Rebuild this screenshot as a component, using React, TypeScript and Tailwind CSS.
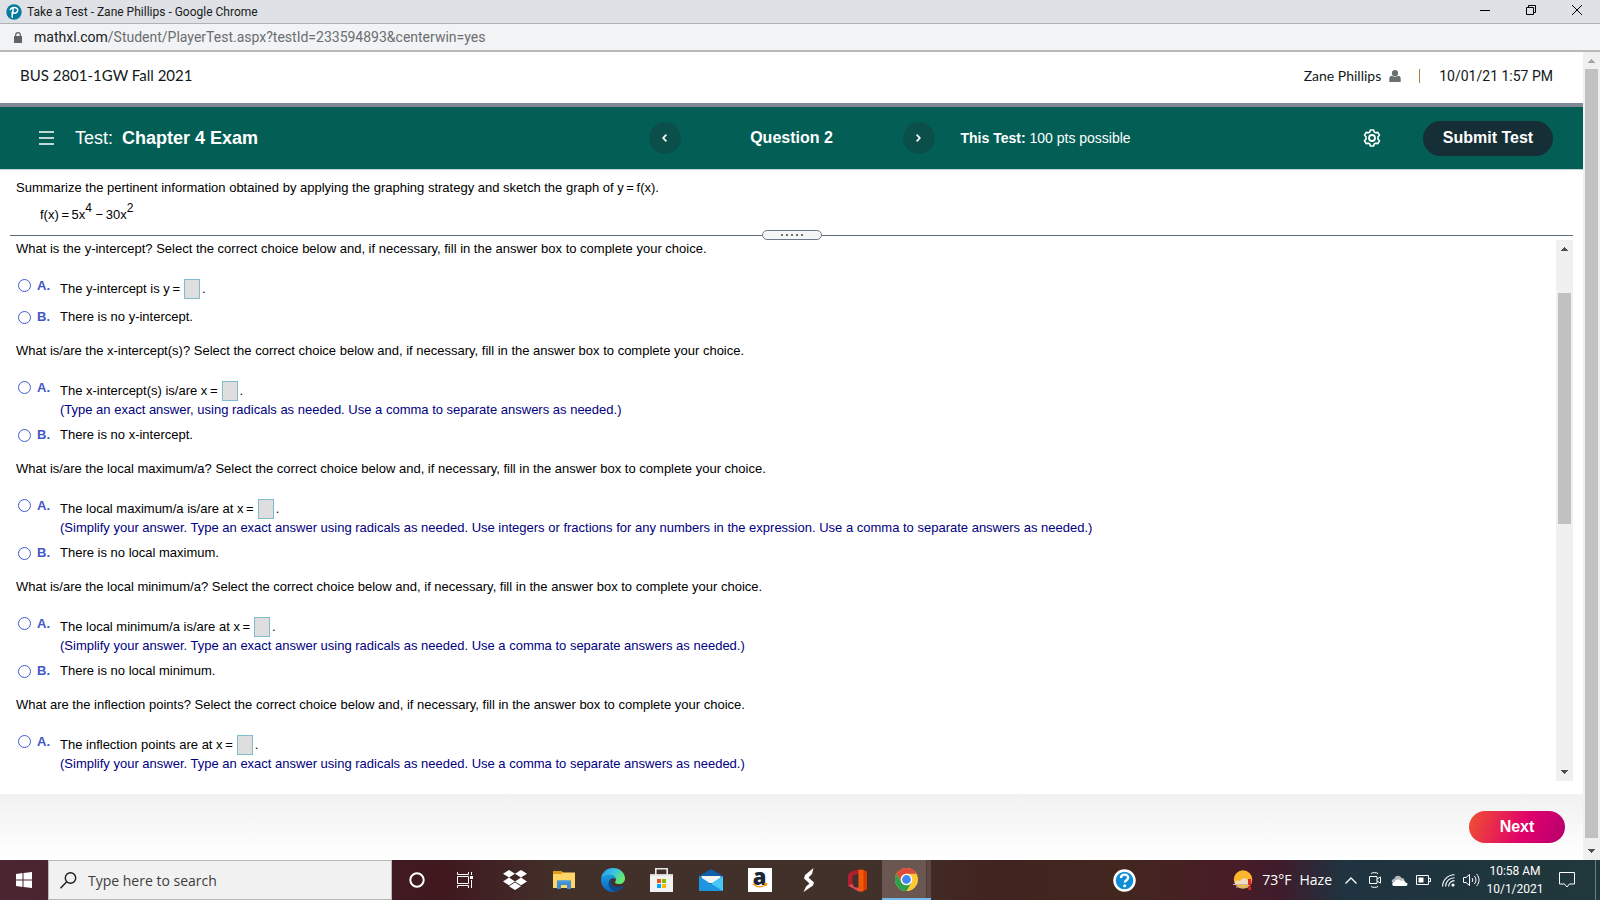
import React, { useState } from 'react';

interface Question {
  id: string;
  prompt: string;
  fill: string;
  hint?: string;
  none?: string;
}

// Math text uses thin spaces (\u2009) around operators
const QUESTIONS: Question[] = [
  {
    id: 'y-int',
    prompt: 'What is the y-intercept? Select the correct choice below and, if necessary, fill in the answer box to complete your choice.',
    fill: 'The y-intercept is y\u2009=',
    none: 'There is no y-intercept.'
  },
  {
    id: 'x-int',
    prompt: 'What is/are the x-intercept(s)? Select the correct choice below and, if necessary, fill in the answer box to complete your choice.',
    fill: 'The x-intercept(s) is/are x\u2009=',
    hint: '(Type an exact answer, using radicals as needed. Use a comma to separate answers as needed.)',
    none: 'There is no x-intercept.'
  },
  {
    id: 'max',
    prompt: 'What is/are the local maximum/a? Select the correct choice below and, if necessary, fill in the answer box to complete your choice.',
    fill: 'The local maximum/a is/are at x\u2009=',
    hint: '(Simplify your answer. Type an exact answer using radicals as needed. Use integers or fractions for any numbers in the expression. Use a comma to separate answers as needed.)',
    none: 'There is no local maximum.'
  },
  {
    id: 'min',
    prompt: 'What is/are the local minimum/a? Select the correct choice below and, if necessary, fill in the answer box to complete your choice.',
    fill: 'The local minimum/a is/are at x\u2009=',
    hint: '(Simplify your answer. Type an exact answer using radicals as needed. Use a comma to separate answers as needed.)',
    none: 'There is no local minimum.'
  },
  {
    id: 'inflection',
    prompt: 'What are the inflection points? Select the correct choice below and, if necessary, fill in the answer box to complete your choice.',
    fill: 'The inflection points are at x\u2009=',
    hint: '(Simplify your answer. Type an exact answer using radicals as needed. Use a comma to separate answers as needed.)'
  }
];

const RADIO = 'appearance-none shrink-0 w-[13px] h-[13px] rounded-full border border-[#3f5fd0] bg-white checked:bg-[#3f5fd0]';

const QuestionBlock: React.FC<{ q: Question }> = ({ q }) => {
  const [choice, setChoice] = useState('');
  const [answer, setAnswer] = useState('');

  return (
    <fieldset>
      <legend className="leading-5 mb-5">{q.prompt}</legend>
      <div className="flex flex-col gap-2 pl-0.5">
        <div className="flex items-start">
          <input id={`${q.id}-a`} type="radio" name={q.id} checked={choice === 'a'} onChange={() => setChoice('a')} className={RADIO} />
          <label htmlFor={`${q.id}-a`} className="w-[23px] ml-1.5 text-[13px] leading-[14px] font-bold text-[#4257c9]">A.</label>
          <div>
            <div className="flex items-center h-5">
              <label htmlFor={`${q.id}-box`}>{q.fill}</label>
              <input
                id={`${q.id}-box`}
                type="text"
                value={answer}
                onChange={(e) => setAnswer(e.target.value)}
                className="w-4 h-5 ml-1 mr-0.5 border border-[#7fbccb] bg-[#dedede]"
              />
              <span>.</span>
            </div>
            {q.hint && <p className="leading-[18px] -mb-0.5 text-[#00007f]">{q.hint}</p>}
          </div>
        </div>
        {q.none && (
          <div className="flex items-center h-5">
            <input id={`${q.id}-b`} type="radio" name={q.id} checked={choice === 'b'} onChange={() => setChoice('b')} className={RADIO} />
            <label htmlFor={`${q.id}-b`} className="flex items-center ml-1.5">
              <span className="w-[23px] text-[13px] leading-5 font-bold text-[#4257c9]">B.</span>
              {q.none}
            </label>
          </div>
        )}
      </div>
    </fieldset>
  );
};

const Arrow: React.FC<{ up?: boolean; color: string }> = ({ up, color }) => (
  <svg width="7" height="4" viewBox="0 0 7 4" fill={color} shapeRendering="crispEdges">
    {up ? <path d="M3 0h1v1h1v1h1v1h1v1H0V3h1V2h1V1h1z" /> : <path d="M0 0h7v1H6v1H5v1H4v1H3V3H2V2H1V1H0z" />}
  </svg>
);

const TitleBar = () => (
  <div className="flex items-center h-6 pl-1.5 pr-[18px] bg-[#dee1e6] border-b border-[#b1b2b4] text-xs text-[#1b1b1b]">
    <svg width="16" height="16" viewBox="0 0 16 16" className="shrink-0">
      <circle cx="8" cy="8" r="7.7" fill="#047a9c" />
      <path d="M6.2 13.2V8.2M4.2 5.6C5.4 3.8 7.6 3.2 9.6 3.7c2 .6 2.6 2.3 1.8 3.8-.8 1.3-2.6 1.9-4 1.5M7 4.5v4" fill="none" stroke="#fff" strokeWidth="1.5" strokeLinecap="round" />
    </svg>
    <span className="ml-[5px]">Take a Test - Zane Phillips - Google Chrome</span>
    <div className="ml-auto flex items-center gap-9 -mt-1">
      <button aria-label="Minimize">
        <svg width="10" height="10" viewBox="0 0 10 10" className="block"><path d="M0 5.5h10" stroke="#000" /></svg>
      </button>
      <button aria-label="Restore">
        <svg width="10" height="10" viewBox="0 0 10 10" className="block" fill="none" stroke="#000"><path d="M.5 2.5h7v7h-7zM2.5 2.5v-2h7v7h-2" /></svg>
      </button>
      <button aria-label="Close">
        <svg width="10" height="10" viewBox="0 0 10 10" className="block"><path d="M0 0l10 10M10 0L0 10" stroke="#000" /></svg>
      </button>
    </div>
  </div>
);

const TestBar = () => (
  <div className="flex items-center h-[62px] px-[30px] bg-[#035f55] text-white">
    <div className="flex-1 flex items-center">
      <button aria-label="Menu" className="ml-2">
        <svg width="16" height="14" viewBox="0 0 16 14" className="block" stroke="#fff" strokeWidth="1.7"><path d="M1 1h15M1 7h15M1 13h15" /></svg>
      </button>
      <h1 className="ml-[21px] text-lg leading-5">
        Test: <b className="ml-1">Chapter 4 Exam</b>
      </h1>
    </div>
    <div className="flex items-center justify-between w-[286px]">
      <button aria-label="Previous question" className="flex items-center justify-center size-8 rounded-full bg-[#0b4f4b]">
        <svg width="5" height="8" viewBox="0 0 5 8" fill="none" stroke="#fff" strokeWidth="1.8"><path d="M4.4.6L1.2 4l3.2 3.4" /></svg>
      </button>
      <h2 className="text-base leading-5 font-bold">Question 2</h2>
      <button aria-label="Next question" className="flex items-center justify-center size-8 rounded-full bg-[#0b4f4b]">
        <svg width="5" height="8" viewBox="0 0 5 8" fill="none" stroke="#fff" strokeWidth="1.8"><path d="M.6.6L3.8 4 .6 7.4" /></svg>
      </button>
    </div>
    <div className="flex-1 flex items-center">
      <span className="ml-[26px] text-sm leading-5"><b>This Test:</b> 100 pts possible</span>
      <button aria-label="Settings" className="ml-auto mr-[42px]">
        <svg width="18" height="18" viewBox="0 0 18 18" className="block" fill="none" stroke="#fff">
          <path d="M7.4 1h3.2l.6 2 1.6.9 2-.5 1.7 2.8-1.5 1.5v2.6l1.5 1.5-1.7 2.8-2-.5-1.6.9-.6 2H7.4l-.6-2-1.6-.9-2 .5-1.7-2.8L3 10.3V7.7L1.5 6.2l1.7-2.8 2 .5 1.6-.9z" strokeWidth="1.6" strokeLinejoin="round" />
          <circle cx="9" cy="9" r="3" strokeWidth="1.8" />
        </svg>
      </button>
      <button className="w-[130px] h-[35px] rounded-full bg-[#162f36] text-base font-bold">Submit Test</button>
    </div>
  </div>
);

const APPS: { name: string; icon: React.ReactNode }[] = [
  {
    name: 'Cortana',
    icon: <svg width="16" height="16" viewBox="0 0 16 16"><circle cx="8" cy="8" r="6.7" fill="none" stroke="#fff" strokeWidth="2" /></svg>
  },
  {
    name: 'Task View',
    icon: (
      <svg width="17" height="16" viewBox="0 0 17 16" fill="none" stroke="#fff">
        <path d="M.5 0v2.500h11V0M.5 16v-2.500h11V16M.5 4.500h11v7H.5zM14.500 0v3M14.500 8v8" />
        <path d="M13 4h3v3h-3z" fill="#fff" stroke="none" />
      </svg>
    )
  },
  {
    name: 'Dropbox',
    icon: (
      <svg width="24" height="20" viewBox="0 0 24 20" fill="#fff">
        <path d="M6 0l6 3.800-6 3.800-6-3.800zM18 0l6 3.800-6 3.800-6-3.800zM6 7.600l6 3.800-6 3.800-6-3.800zM18 7.600l6 3.800-6 3.800-6-3.800zM6 16.200l6-3.800 6 3.800-6 3.800z" />
      </svg>
    )
  },
  {
    name: 'File Explorer',
    icon: (
      <svg width="22" height="18" viewBox="0 0 22 18">
        <path d="M0 0h8l2 1.500h12V17H0z" fill="#ffd666" />
        <path d="M0 0h9v3H0z" fill="#e09c12" />
        <path d="M4 18V9.500h14V18h-4v-4H8v4z" fill="#3d8fd4" />
        <path d="M5.500 9.500h11v2h-11z" fill="#4a9bdc" />
      </svg>
    )
  },
  {
    name: 'Microsoft Edge',
    icon: (
      <svg width="24" height="24" viewBox="0 0 24 24">
        <defs>
          <linearGradient id="edgeTop" x1="0" y1="0" x2="1" y2=".5"><stop offset="0" stopColor="#2098e0" /><stop offset=".5" stopColor="#35c1e8" /><stop offset="1" stopColor="#66eb6e" /></linearGradient>
          <linearGradient id="edgeLow" x1="0" y1="0" x2="0" y2="1"><stop offset="0" stopColor="#1b9de2" /><stop offset="1" stopColor="#0b62b8" /></linearGradient>
        </defs>
        <path d="M0 11C.6 4.500 5.500 0 12 0c7 0 12 5 12 10.500 0 3.500-2.600 5.500-5.800 5.500-2.600 0-4.200-.9-4.200-1.800 0-.7.900-1.200.900-2.700C14.900 9 12 7 8.500 7 4.500 7 1.500 8.800 0 11z" fill="url(#edgeTop)" />
        <path d="M0 12C.5 9 4 6.800 8.200 6.800c3.500 0 6 2 6.300 4.200-1-.8-2-1-3-.8C8 11.500 7 15 8.500 18.500c1.200 2.800 3.500 4.700 6 5.300C7 25.300 0 20 0 12z" fill="url(#edgeLow)" />
        <path d="M9.800 11C7 13.500 7 17 9 20c2 2.700 4.600 3.900 6.500 3.500 3.500-.9 6-3.100 7-5.300.2-.5-.2-.7-.6-.5-4.500 2.300-9.500 1.300-11.500-2-.9-1.600-1-3.300-.6-4.700z" fill="#114a8b" />
      </svg>
    )
  },
  {
    name: 'Microsoft Store',
    icon: (
      <svg width="23" height="24" viewBox="0 0 23 24">
        <path d="M0 6h23v18H0z" fill="#f2f2f2" />
        <path d="M0 6h23v1.500H0z" fill="#d2d2d2" />
        <path d="M5.800 8V.8h11.400V8" fill="none" stroke="#e8e8e8" strokeWidth="1.600" />
        <path d="M7 11h4v4H7z" fill="#f25022" /><path d="M12 11h4v4h-4z" fill="#7fba00" />
        <path d="M7 16h4v4H7z" fill="#00a4ef" /><path d="M12 16h4v4h-4z" fill="#ffb900" />
      </svg>
    )
  },
  {
    name: 'Mail',
    icon: (
      <svg width="24" height="22" viewBox="0 0 24 22">
        <path d="M0 7l12-7 12 7v6H0z" fill="#0f5ea8" />
        <path d="M2.500 7h19v7h-19z" fill="#f3f3f3" />
        <path d="M0 7l12 8 12-8v15H0z" fill="#1d95e0" />
        <path d="M24 7v15L12 14.800z" fill="#46c8f5" />
      </svg>
    )
  },
  {
    name: 'Amazon',
    icon: (
      <span className="relative flex justify-center size-6 bg-white text-[#1d2733] font-extrabold text-[22px] leading-4 font-['Open_Sans',sans-serif]">
        a
        <svg width="16" height="5" viewBox="0 0 16 5" className="absolute left-1 bottom-1" fill="none" stroke="#f79400" strokeWidth="1.300"><path d="M1 1c4 3.500 9 3.500 12.500 1M12 .8l2.600-.1L14 3" /></svg>
      </span>
    )
  },
  {
    name: 'Streamlabs',
    icon: (
      <svg width="12" height="24" viewBox="0 0 12 24" fill="#fff">
        <path d="M10.500 0L9 6 5.500 9.500l5.500 5-1 3-8 5.500-1.500 1 2.500-5.500 3.500-3L1 10.500 2 7z" />
      </svg>
    )
  },
  {
    name: 'Office',
    icon: (
      <svg width="19" height="23" viewBox="0 0 19 23">
        <path d="M11.500 0L19 2.200v18.300L11.500 23z" fill="#d83b01" />
        <path d="M11.500 0L2.500 3 0 6v11l4.500-1.500V6.500l7-2z" fill="#b11e2e" />
        <path d="M0 16.500l4.500-1.500 1.500 3 5.500 1V23z" fill="#e8475a" />
        <path d="M10.500 1l5-.3v21.800l-5-.5z" fill="#f25a0a" />
      </svg>
    )
  },
  {
    name: 'Google Chrome',
    icon: (
      <svg width="23" height="23" viewBox="0 0 24 24">
        <circle cx="12" cy="12" r="12" fill="#fcc934" />
        <path d="M1.600 6A12 12 0 0 1 22.400 6H12a6 6 0 0 0-5.200 9z" fill="#e04a3c" />
        <path d="M1.600 6A12 12 0 0 0 12 24l5.200-9A6 6 0 0 1 6.800 15z" fill="#2fa04e" />
        <circle cx="12" cy="12" r="6" fill="#fff" />
        <circle cx="12" cy="12" r="4.600" fill="#4285f4" />
      </svg>
    )
  }
];

const Taskbar = () => (
  <footer className="flex items-stretch h-10 shrink-0 text-white bg-[linear-gradient(90deg,#4b2530_0%,#40191f_28%,#42302a_35%,#42302a_55%,#41231f_62%,#43271f_70%,#481c26_77%,#3f1c2b_80%,#1f3340_84%,#20383b_100%)] font-['Open_Sans',sans-serif]">
    <button aria-label="Start" className="flex items-center justify-center w-12">
      <svg width="16" height="16" viewBox="0 0 16 16" fill="#fff"><path d="M0 2l6.500-.9v6.400H0zM7.500 1L16 0v7.500H7.500zM0 8.500h6.500v6.400L0 14zM7.500 8.500H16V16l-8.500-1z" /></svg>
    </button>
    <label className="flex items-center gap-[11px] w-[344px] pl-[11px] bg-[#f1f1f1] border border-[#b8b8b8]">
      <svg width="17" height="17" viewBox="0 0 17 17" fill="none" stroke="#1c1c1c" strokeWidth="1.400"><circle cx="10.500" cy="6" r="5.200" /><path d="M6.700 9.800L.5 16.200" /></svg>
      <input type="text" placeholder="Type here to search" aria-label="Search" className="flex-1 min-w-0 pt-0.5 text-sm text-[#333] placeholder:text-[#3d3d3d] outline-none" />
    </label>
    {APPS.map((app) => (
      <button
        key={app.name}
        aria-label={app.name}
        className={`flex items-center justify-center w-[49px] ${app.name === 'Google Chrome' ? 'bg-[linear-gradient(90deg,#6b5752_44px,#4b3a36_44px,#4b3a36_45px,#5b4843_45px)] border-b-2 border-[#76b9ed]' : ''}`}
      >
        {app.icon}
      </button>
    ))}
    <div className="ml-auto flex items-center">
      <button aria-label="Help" className="mr-[97px]">
        <svg width="23" height="23" viewBox="0 0 23 23" className="block">
          <circle cx="11.500" cy="11.500" r="10" fill="#0d8ed6" stroke="#fff" strokeWidth="2.500" />
          <path d="M8 9c0-4.600 7.200-4.300 7.200-.4 0 2.600-3.500 2.500-3.500 5" fill="none" stroke="#fff" strokeWidth="2.400" />
          <circle cx="11.700" cy="16.700" r="1.500" fill="#fff" />
        </svg>
      </button>
      <button className="flex items-center text-sm">
        <svg width="20" height="20" viewBox="0 0 20 20" className="mr-[9px]">
          <circle cx="10" cy="9.500" r="9.200" fill="#fbb62c" />
          <path d="M2 13c0-3 4-3 5-1.500C8 7 15 7 15.500 11.500c2 0 3 1 3 2.500H2z" fill="#f0dcc0" />
          <path d="M0 14.500h16M3 17h12" stroke="#c7b8a5" strokeWidth="1.200" />
          <path d="M15 9h3v6h-3zM15.500 16.500h2.500V20h-2.500z" fill="#e2242c" />
        </svg>
        73°F
        <span className="ml-2">Haze</span>
      </button>
      <div className="flex items-center ml-[13px] mr-[3px]">
        <svg width="12" height="7" viewBox="0 0 12 7" fill="none" stroke="#fff" strokeWidth="1.300"><path d="M.5 6.500L6 1l5.500 5.500" /></svg>
        <svg width="12" height="16" viewBox="0 0 12 16" className="ml-3" fill="none" stroke="#fff"><path d="M.5 4.500h7.500v7H.5zM8 7l3.500-2v6L8 9M2 1.500C4 .3 7 .3 9 1.500M2 14.500c2 1.200 5 1.200 7 0" /></svg>
        <svg width="17" height="11" viewBox="0 0 17 11" className="ml-2.5">
          <path d="M3 8C0 8 0 4 3 4 4 0 9-.5 10.500 3 13 2.500 14 5 13 7z" fill="#b4b8b9" />
          <path d="M3.500 11C.5 11 .5 7.500 3.500 7c1.500-3 5-3 6.500-1 3-1 4 0 4.500 1.500C17.500 8 17 11 14.500 11z" fill="#fff" />
        </svg>
        <svg width="15" height="10" viewBox="0 0 15 10" className="ml-2" fill="none" stroke="#fff"><path d="M.5.5h12v9H.5zM13 3.500h1.500v3H13" /><path d="M2.500 2.500h5v5h-5z" fill="#fff" stroke="none" /></svg>
        <svg width="13" height="13" viewBox="0 0 13 13" className="ml-[11px]" fill="none" stroke="#fff" strokeWidth="1.100">
          <path d="M.6 12.500C.6 6 6 .8 12.500.8M3.600 12.500c0-5 4-8.800 8.900-8.800M6.600 12.500c0-3.300 2.600-5.900 5.900-5.900" />
          <circle cx="11" cy="11" r="1.600" fill="#fff" stroke="none" />
        </svg>
        <svg width="17" height="14" viewBox="0 0 17 14" className="ml-2" fill="none" stroke="#fff"><path d="M.5 4.500h2.500l3.500-3v11L3 9.500H.5zM9 5c1 1.200 1 2.800 0 4M11.300 3c2.200 2.500 2.200 5.500 0 8M13.600 1c3.200 3.800 3.200 8.200 0 12" /></svg>
      </div>
      <div className="w-16 text-center text-xs leading-[18px] font-['Roboto',sans-serif]">
        <div>10:58 AM</div>
        <div>10/1/2021</div>
      </div>
      <button aria-label="Notifications" className="ml-3 mr-5">
        <svg width="16" height="16" viewBox="0 0 16 16" className="block" fill="none" stroke="#fff"><path d="M.5.5h15v11.500h-5l-2.500 3-2.500-3h-5z" /></svg>
      </button>
      <div className="w-px h-10 mr-1 bg-[#6f7f81]" />
    </div>
  </footer>
);

export default function App() {
  return (
    <div className="flex flex-col h-screen overflow-hidden bg-white text-black text-[13px] font-['Liberation_Sans',Arial,sans-serif]">
      <div className="shrink-0 font-['Roboto',sans-serif]">
        <TitleBar />
        <div className="flex items-center h-7 pl-3.5 bg-[#f1f3f4] border-b-2 border-[#b8b9ba] text-sm text-[#6b6e72]">
          <svg width="8" height="11" viewBox="0 0 8 11" fill="#5f6368"><path d="M0 4h8v7H0z" /><path d="M1.700 4.500V3a2.300 2.300 0 0 1 4.600 0v1.500" fill="none" stroke="#5f6368" strokeWidth="1.200" /></svg>
          <span className="ml-3"><span className="text-[#202124]">mathxl.com</span>/Student/PlayerTest.aspx?testId=233594893&amp;centerwin=yes</span>
        </div>
      </div>

      <div className="flex flex-1 min-h-0">
        <div className="flex flex-col flex-1 min-w-0">
          <header className="flex items-center h-[51px] shrink-0 pl-5 pr-[30px] pb-1 text-[#101820] font-['Lato',sans-serif]">
            <span className="text-[15px]">BUS 2801-1GW Fall 2021</span>
            <div className="ml-auto flex items-center">
              <span className="text-sm">Zane Phillips</span>
              <svg width="12" height="12" viewBox="0 0 12 12" className="ml-2" fill="#6a7070"><circle cx="6" cy="3.200" r="3.100" /><path d="M.3 12V8.500C.3 6.500 2 5.800 3 5.800c1.600 1.400 4.400 1.400 6 0 1 0 2.700.7 2.700 2.700V12z" /></svg>
              <span className="w-px h-3.5 ml-[18px] mr-[19px] bg-[#a8843e]" />
              <span className="text-sm font-['Roboto',sans-serif]">10/01/21 1:57 PM</span>
            </div>
          </header>
          <div className="h-1 shrink-0 bg-[#808a96]" />
          <TestBar />

          <section className="shrink-0 pt-2 px-4 border-t border-[#c3d3d6]">
            <p className="leading-5">Summarize the pertinent information obtained by applying the graphing strategy and sketch the graph of y{'\u2009=\u2009'}f(x).</p>
            <p className="mt-[7px] pl-6 leading-5 h-5">
              f(x){'\u2009=\u2009'}5x<sup className="text-xs leading-none -top-[7px]">4</sup>{' −\u2009'}30x<sup className="text-xs leading-none -top-[7px]">2</sup>
            </p>
          </section>

          <div className="flex items-center shrink-0 h-2.5 mx-2.5 mt-[5px]">
            <div className="flex-1 h-px bg-[#5f6b78]" />
            <button aria-label="Resize panels" className="flex items-center justify-center gap-[3px] w-[60px] h-2.5 rounded-full border border-[#6f7b8a] bg-[#f5f6f7]">
              {[0, 1, 2, 3, 4].map((n) => (
                <span key={n} className="size-0.5 bg-[#6a7070]" />
              ))}
            </button>
            <div className="flex-1 h-px bg-[#5f6b78]" />
          </div>

          <div className="flex flex-1 min-h-0 mb-[13px] pr-2.5">
            <main className="flex flex-col flex-1 gap-3.5 min-w-0 -mt-px px-4 overflow-hidden">
              {QUESTIONS.map((q) => (
                <QuestionBlock key={q.id} q={q} />
              ))}
            </main>
            <div className="flex flex-col items-center w-[17px] pt-[7px] pb-[7px] bg-[#f0f0f0]">
              <Arrow up color="#505050" />
              <div className="w-[13px] h-[231px] mt-[42px] bg-[#c1c1c1]" />
              <div className="mt-auto"><Arrow color="#505050" /></div>
            </div>
          </div>

          <div className="flex items-center justify-end h-[66px] shrink-0 pr-[18px] bg-linear-to-b from-[#f1f1f1] to-white">
            <button className="w-24 h-8 rounded-full bg-[linear-gradient(110deg,#ee4a35_5%,#e0006c_58%,#b5006f_100%)] text-base font-bold text-white">Next</button>
          </div>
        </div>

        <div className="flex flex-col items-center w-[17px] py-[7px] bg-[#f0f0f0]">
          <Arrow up color="#a3a3a3" />
          <div className="flex-1 w-[13px] mt-1.5 mb-[11px] bg-[#c1c1c1]" />
          <Arrow color="#505050" />
        </div>
      </div>

      <Taskbar />
    </div>
  );
}
